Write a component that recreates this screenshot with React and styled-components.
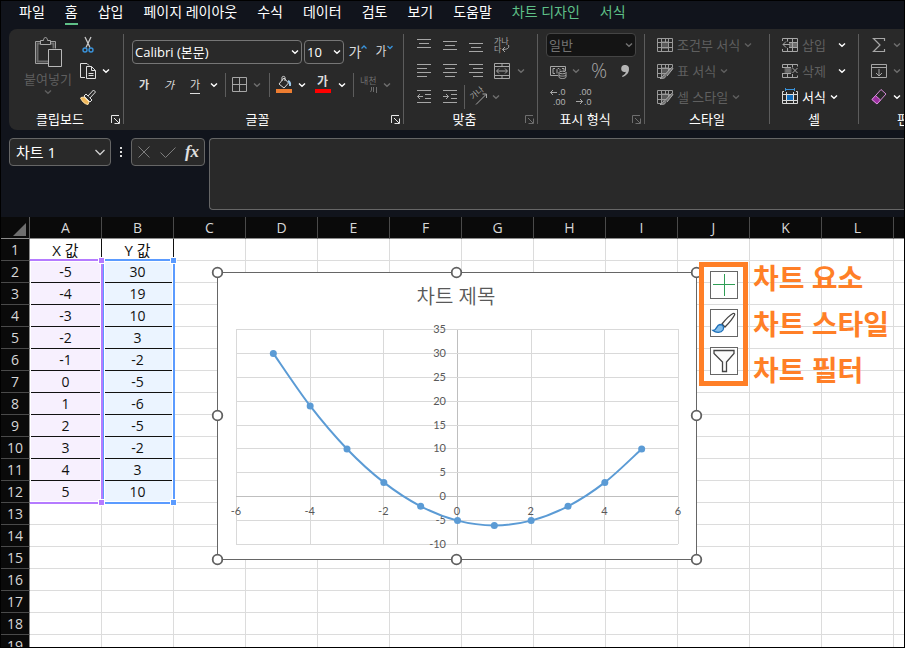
import styled, { createGlobalStyle } from "styled-components";

const SANS = `"Open Sans", "Noto Sans CJK KR", sans-serif`;
const ACCENT = "#5fc088";
const CALLOUT = "#ff7f27";
const SERIES = "#5b9bd5";

const TABS = [
  "파일",
  "홈",
  "삽입",
  "페이지 레이아웃",
  "수식",
  "데이터",
  "검토",
  "보기",
  "도움말",
];
const CHART_TABS = ["차트 디자인", "서식"];
const COLUMNS = "ABCDEFGHIJKLM".split("");
const ROW_COUNT = 19;
const POINTS = [
  [-5, 30],
  [-4, 19],
  [-3, 10],
  [-2, 3],
  [-1, -2],
  [0, -5],
  [1, -6],
  [2, -5],
  [3, -2],
  [4, 3],
  [5, 10],
];

const GlobalStyle = createGlobalStyle`
  * {
    box-sizing: border-box;
  }

  body {
    margin: 0;
    font-family: ${SANS};
  }

  button,
  input,
  select,
  textarea {
    margin: 0;
    padding: 0;
    border: 0;
    background: none;
    color: inherit;
    font: inherit;
  }

  svg {
    display: block;
    flex: none;
    overflow: visible;
  }
`;

const Window = styled.div`
  display: flex;
  flex-direction: column;
  height: 100vh;
  overflow: hidden;
  border: 1px solid #000;
  background: #11141c;
  color: #fff;
`;

const TabBar = styled.nav`
  display: flex;
  align-items: flex-start;
  flex: none;
  height: 28px;
  padding: 2px 0 0 8px;
`;

const Tab = styled.button`
  padding: 0 10px;
  color: ${({ $contextual }) => ($contextual ? ACCENT : "#fff")};
  font-size: 14px;
  line-height: 18px;
  white-space: nowrap;

  span {
    display: block;
    height: 22px;
    border-bottom: 2px solid
      ${({ $active }) => ($active ? ACCENT : "transparent")};
  }
`;

const Ribbon = styled.div`
  display: flex;
  flex: none;
  margin-left: 8px;
  padding: 3px 0 2px;
  overflow: hidden;
  border-radius: 8px 0 0 8px;
  background: #292929;
`;

const Divider = styled.div`
  flex: none;
  width: 1px;
  margin: 2px 0 4px;
  background: #5c5c5c;
`;

const GroupBox = styled.section`
  display: flex;
  flex: none;
  flex-direction: column;
  width: ${({ $width }) => $width}px;
`;

const GroupBody = styled.div`
  display: flex;
  flex-direction: ${({ $row }) => ($row ? "row" : "column")};
  height: 78px;
  padding-left: ${({ $inset }) => $inset}px;
`;

const GroupFooter = styled.div`
  display: flex;
  align-items: center;
  height: 18px;
  font-size: 13px;
  line-height: 18px;
  text-align: center;
  white-space: nowrap;

  span {
    flex: 1;
  }
`;

const Launcher = styled.button`
  width: 12px;
  color: ${({ $dim }) => ($dim ? "#6e6e6e" : "#e6e6e6")};
`;

const ToolRow = styled.div`
  display: flex;
  align-items: center;
  height: 26px;
`;

const FontRows = styled.div`
  display: flex;
  flex-direction: column;
  gap: 7px;
  padding-top: 7px;
`;

const ToolButton = styled.button`
  display: flex;
  align-items: center;
  justify-content: center;
  flex: none;
  width: ${({ $width }) => $width || 26}px;
  height: 26px;
  color: ${({ $tone }) => $tone || "#a6a6a6"};
`;

const Letter = styled.span`
  font-size: ${({ $size }) => $size || 11}px;
  line-height: 16px;
  color: #dcdcdc;
  font-weight: ${({ $bold }) => ($bold ? 700 : 400)};
  font-style: ${({ $italic }) => ($italic ? "italic" : "normal")};
  border-bottom: ${({ $underline }) =>
    $underline ? "1px solid #dcdcdc" : "0"};
`;

const Percent = styled.span`
  font-size: 20px;
  font-weight: 300;
  line-height: 24px;
`;

const ToolSeparator = styled.div`
  flex: none;
  width: 1px;
  height: 24px;
  margin: 0 ${({ $gap }) => $gap}px;
  background: #5c5c5c;
`;

const PasteButton = styled.button`
  display: flex;
  flex-direction: column;
  align-items: center;
  width: 52px;
  padding-top: 5px;
  color: #5f5f5f;
  font-size: 13px;
  line-height: 20px;
  white-space: nowrap;
`;

const ClipboardTools = styled.div`
  margin-left: 4px;
`;

const Picker = styled.div`
  display: grid;
  align-items: center;
  flex: none;
  width: ${({ $width }) => $width}px;
  height: 24px;
  margin-right: 2px;
  border: 1px solid ${({ $dim }) => ($dim ? "#444" : "#767676")};
  border-radius: 4px;
  background: ${({ $dim }) => ($dim ? "#141414" : "#292929")};
  color: ${({ $dim }) => ($dim ? "#737373" : "#fff")};

  select,
  svg {
    grid-area: 1 / 1;
  }

  select {
    width: 100%;
    padding: 0 2px;
    appearance: none;
    font-size: 13px;
    line-height: 20px;
    opacity: 1;
  }

  svg {
    justify-self: end;
    margin-right: 2px;
    pointer-events: none;
  }
`;

const LabelButton = styled.button`
  display: flex;
  align-items: center;
  gap: 4px;
  height: 26px;
  color: ${({ $enabled }) => ($enabled ? "#fff" : "#5f5f5f")};
  font-size: 13px;
  line-height: 20px;
  white-space: nowrap;

  span {
    padding-right: ${({ $wide }) => ($wide ? 8 : 0)}px;
  }
`;

const FormulaRow = styled.div`
  display: flex;
  align-items: flex-start;
  flex: none;
  padding: 8px 0 7px 8px;
`;

const FormulaPanel = styled.div`
  display: flex;
  align-items: center;
  flex: none;
  height: 28px;
  border: 1px solid #666;
  border-radius: 4px;
  background: #292929;
`;

const NameBox = styled(FormulaPanel)`
  width: 102px;
  padding: 0 5px 0 6px;

  input {
    flex: 1;
    min-width: 0;
    font-size: 15px;
    line-height: 20px;
  }
`;

const Dots = styled.div`
  display: flex;
  flex-direction: column;
  gap: 2px;
  margin: 9px 9px 0;

  i {
    width: 2px;
    height: 2px;
    background: #dcdcdc;
  }
`;

const FormulaActions = styled(FormulaPanel)`
  width: 74px;
  margin-right: 4px;
`;

const Fx = styled.span`
  color: #e0e0e0;
  font: italic 700 17px "Liberation Serif", serif;
`;

const FormulaInput = styled.textarea`
  flex: 1;
  height: 72px;
  border: 1px solid #666;
  border-right: 0;
  border-radius: 4px 0 0 4px;
  background: #292929;
  resize: none;
`;

const Sheet = styled.main`
  position: relative;
  flex: 1;
  min-height: 0;
  overflow: hidden;
  background: #fff;
  color: #111;
`;

const Grid = styled.table`
  width: 965px;
  table-layout: fixed;
  border-spacing: 0;
  font-size: 14px;
  line-height: 20px;
  text-align: center;

  th,
  td {
    height: 22px;
    padding: 0;
  }
`;

const CornerCell = styled.td`
  width: 29px;
  border-right: 1px solid #5c5c5c;
  border-bottom: 1px solid #8c8c8c;
  background: #0a0a0a;

  svg {
    margin: 3px 3px 0 auto;
  }
`;

const ColumnHeader = styled.th`
  width: 72px;
  border-right: 1px solid #4a4a4a;
  border-bottom: 1px solid #8c8c8c;
  background: #0a0a0a;
  color: #d8d8d8;
  font-weight: 400;
`;

const RowHeader = styled.th`
  border-right: 1px solid #8c8c8c;
  border-bottom: 1px solid #4a4a4a;
  background: #0a0a0a;
  color: #d8d8d8;
  font-weight: 400;
`;

const Cell = styled.td`
  border-right: 1px solid ${({ $filled }) => ($filled ? "#111" : "#dcdcdc")};
  border-bottom: 1px solid ${({ $filled }) => ($filled ? "#111" : "#dcdcdc")};
  background: ${({ $fill }) => $fill || "#fff"};
  font-size: ${({ $heading }) => ($heading ? 15 : 14)}px;
`;

// Coloured outline around the cells that feed the chart
const Range = styled.div`
  position: absolute;
  top: 42px;
  left: ${({ $left }) => $left}px;
  width: 73px;
  height: 245px;
  border: 2px solid ${({ $color }) => $color};
  border-left-width: ${({ $openLeft }) => ($openLeft ? 0 : 2)}px;
  box-shadow: inset 0 0 0 1px #fff;
  pointer-events: none;
`;

const RangeHandle = styled.i`
  position: absolute;
  top: ${({ $bottom }) => ($bottom ? "auto" : "-4px")};
  bottom: ${({ $bottom }) => ($bottom ? "-4px" : "auto")};
  right: -4px;
  width: 7px;
  height: 7px;
  border: 1px solid #fff;
  background: ${({ $color }) => $color};
`;

const ChartObject = styled.svg`
  position: absolute;
  top: 55px;
  left: 216px;
`;

const ChartTitle = styled.text`
  fill: #595959;
  font-size: 20px;
  font-weight: 350;
  text-anchor: middle;
`;

const AxisLabel = styled.text`
  fill: #595959;
  font-family: Lato, sans-serif;
  font-size: 11px;
  text-anchor: ${({ $anchor }) => $anchor};
`;

const Callout = styled.aside`
  position: absolute;
  top: 38px;
  left: 698px;
  display: flex;
  align-items: center;
  gap: 5px;
`;

const CalloutFrame = styled.div`
  display: flex;
  flex-direction: column;
  align-items: center;
  gap: 10px;
  width: 49px;
  padding: 4px 0 6px;
  border: 5px solid ${CALLOUT};
`;

const ChartButton = styled.button`
  display: flex;
  align-items: center;
  justify-content: center;
  width: 28px;
  height: 28px;
  border: 1px solid #666;
  background: #fff;
`;

const CalloutLabels = styled.div`
  color: ${CALLOUT};
  font-size: 28px;
  font-weight: 700;
  line-height: 46px;
  white-space: nowrap;
`;

const Chevron = ({ color = "currentColor" }) => (
  <svg width="8" height="6" viewBox="0 0 8 6" fill="none" stroke={color}>
    <path d="M1 1.5 4 4.3 7 1.5" strokeWidth="1.4" />
  </svg>
);

const Drop = ({ width = 12, active, label }) => (
  <ToolButton
    $width={width}
    $tone={active ? "#fff" : "#6e6e6e"}
    aria-label={label}
  >
    <Chevron />
  </ToolButton>
);

const Icon = ({ size = 16, children }) => (
  <svg
    width={size}
    height={size}
    viewBox={`0 0 ${size} ${size}`}
    fill="none"
    stroke="currentColor"
  >
    {children}
  </svg>
);

const PasteIcon = () => (
  <svg width="28" height="32" viewBox="0 0 28 32" fill="none">
    <path d="M7 4.500H1.500v22H14M17 4.500h4.500v7" stroke="#a0a0a0" />
    <path d="M6.500 6.500h-3v18H14M17 6.500h2.500v5" stroke="#6c6c6c" strokeWidth="2" />
    <path d="M6.500 7.500v-4h3c0-4 4-4 4 0h3v4z" fill="#292929" stroke="#a8a8a8" />
    <path d="M14.500 12.500h13v17h-13z" fill="#292929" stroke="#b8b8b8" />
  </svg>
);

const CutIcon = () => (
  <Icon>
    <path d="M5 0 10 10.500M11 0 6 10.500" stroke="#c8c8c8" strokeWidth="1.300" />
    <circle cx="5" cy="13" r="2" stroke="#3a94dc" strokeWidth="1.400" />
    <circle cx="11" cy="13" r="2" stroke="#3a94dc" strokeWidth="1.400" />
  </Icon>
);

const CopyIcon = () => (
  <Icon>
    <path d="M5 14.500H.5V.5H7l2 2" stroke="#e0e0e0" />
    <path d="M6.500 3.500h5l4 4v8h-9z" stroke="#e0e0e0" />
    <path d="M11.500 3.500v4h4M8.500 10.500h5M8.500 12.500h5" stroke="#e0e0e0" />
  </Icon>
);

const BrushIcon = () => (
  <Icon>
    <path d="M1 8.500 4 8l5 5-1 2.500C4 15 2 12 .5 9z" fill="#f2b95c" stroke="#ffe2a8" />
    <path d="m4 7 2-2 6 6-2 2z" fill="#292929" stroke="#e0e0e0" />
    <path d="m8 7 5.500-6 2 2-5.500 6" fill="#292929" stroke="#e0e0e0" />
  </Icon>
);

const BordersIcon = () => (
  <Icon>
    <path d="M.5.5h14v14H.5zM7.500 .5v14M.5 7.500h14" />
  </Icon>
);

const FillIcon = () => (
  <svg width="16" height="18" viewBox="0 0 16 18" fill="none">
    <path d="m3 8 5-6 4.500 5L8 12zM6 5V1.500c0-1.500 3-1.500 3 0V5" stroke="#d8d8d8" />
    <path d="M12 5c3 1 2 4 2 5" stroke="#9cc8ea" strokeWidth="2" />
    <path d="M0 13h16v4H0z" fill="#ed7d31" />
  </svg>
);

const FontColorIcon = () => (
  <svg width="16" height="18" viewBox="0 0 16 18">
    <text x="2" y="10" fill="#dcdcdc" fontSize="12" fontWeight="700">
      가
    </text>
    <path d="M0 13h16v4H0z" fill="#f00" />
  </svg>
);

const PhoneticIcon = () => (
  <svg width="18" height="18" viewBox="0 0 18 18" fill="none">
    <text x="0" y="8" fill="#6e6e6e" fontSize="9">
      내천
    </text>
    <path d="M11.500 11v3l-1 2M13.500 11v5M16.500 11v6" stroke="#6e6e6e" />
  </svg>
);

const Caret = ({ down }) => (
  <svg width="6" height="16" viewBox="0 0 6 16" fill="none">
    <path
      d={down ? "M.5 2 3 4.500 5.500 2" : "M.5 4.500 3 2l2.500 2.500"}
      stroke="#3a94dc"
      strokeWidth="1.300"
    />
  </svg>
);

const ALIGN_PATHS = {
  "위쪽 맞춤": "M1 2.500h14M3 6.500h10M1 10.500h14",
  "가운데 맞춤": "M1 4.500h14M3 8.500h10M1 12.500h14",
  "아래쪽 맞춤": "M1 6.500h14M3 10.500h10M1 14.500h14",
  "왼쪽 정렬": "M1 1.500h14M1 5.500h10M1 9.500h14M1 13.500h10",
  "가운데 정렬": "M1 1.500h14M3 5.500h10M1 9.500h14M3 13.500h10",
  "오른쪽 정렬": "M1 1.500h14M5 5.500h10M1 9.500h14M5 13.500h10",
  내어쓰기: "M1 1.500h14M9 5.500h6M9 9.500h6M1 13.500h14M1.500 7.500H7M4 5 1.500 7.500 4 10",
  들여쓰기: "M1 1.500h14M9 5.500h6M9 9.500h6M1 13.500h14M1 7.500h5.500M4 5l2.500 2.500L4 10",
};

const AlignButton = ({ name }) => (
  <ToolButton aria-label={name}>
    <Icon>
      <path d={ALIGN_PATHS[name]} />
    </Icon>
  </ToolButton>
);

const WrapIcon = () => (
  <Icon>
    <text x="0" y="7" fill="#a6a6a6" stroke="none" fontSize="8">
      가나
    </text>
    <text x="0" y="15" fill="#a6a6a6" stroke="none" fontSize="8">
      다
    </text>
    <path d="M14.500 8c1 3-1 4.500-6 4.500M11 10l-2.500 2.500L11 15" />
  </Icon>
);

const MergeIcon = () => (
  <Icon>
    <path d="M.5.5h15v15H.5zM.5 3.500h15M.5 12.500h15M8 .5v3M8 12.500v3M3 8h10M5 5.500 2.500 8 5 10.500M11 5.500 13.500 8 11 10.500" />
  </Icon>
);

const OrientationIcon = () => (
  <Icon>
    <text
      x="1"
      y="10"
      fill="#a6a6a6"
      stroke="none"
      fontSize="8"
      transform="rotate(-40 3 9)"
    >
      가나
    </text>
    <path d="M5 15.500 15 5.500M11.500 5h4v4" />
  </Icon>
);

const CurrencyIcon = () => (
  <Icon size={17}>
    <path d="M8 12.500H.5v-9h15V8M5 5.500H3v5h2M7 10.500v-4l1-1h1l1 1v1M12 5.500h2V8" />
    <ellipse cx="12.500" cy="9.500" rx="3.500" ry="1.300" fill="#292929" />
    <path d="M9 9.500V14c0 2 7 2 7 0V9.500M9 12c0 1.500 7 1.500 7 0" />
  </Icon>
);

const CommaIcon = () => (
  <svg width="10" height="14" viewBox="0 0 10 14" fill="#b4b4b4">
    <path d="M5 1a3.700 3.700 0 0 1 4 4c0 4-2.500 6.500-6.500 8l-.5-1c2.500-1 3.700-2.500 3.800-4.200C3 8.500 1 7 1.200 4.500A3.600 3.600 0 0 1 5 1z" />
  </svg>
);

const DecimalText = styled.text`
  fill: #b0b0b0;
  stroke: none;
  font-family: "Liberation Sans", sans-serif;
  font-size: 9px;
`;

const DecimalIcon = ({ increase }) => (
  <svg width="16" height="18" viewBox="0 0 16 18" fill="none" stroke="#a6a6a6">
    <DecimalText x={increase ? 8 : 3} y="7">
      {increase ? ".0" : ".00"}
    </DecimalText>
    <DecimalText x={increase ? 3 : 8} y="17">
      {increase ? ".00" : ".0"}
    </DecimalText>
    <path
      d={increase ? "M.5 4.500H7M3 2 .5 4.500 3 7" : "M0 13.500h6.500M4 11l2.500 2.500L4 16"}
    />
  </svg>
);

const StyleIcon = ({ brush }) => (
  <Icon>
    <path d="M4 4h8v8H4z" fill="#5a5a5a" stroke="none" />
    <path
      d="M.5 1.500h15v13H.5zM.5 5.500h15M.5 10.500h15M4.500 1.500v13M8.500 1.500v4M11.500 1.500v13"
      stroke="#9a9a9a"
    />
    {brush && (
      <>
        <path d="M6 16 16 4v12z" fill="#292929" stroke="none" />
        <path
          d="M3 15.500c3-.5 2-3.500 4.500-3.500 2.500 1 1 4-4.500 3.500zM8 11.500l6.500-7 1.500 1-6 7.500"
          fill="#707070"
          stroke="#aaa"
        />
      </>
    )}
  </Icon>
);

const InsertIcon = () => (
  <Icon>
    <path d="M7 5h8v5H7z" fill="#6e6e6e" stroke="none" />
    <path
      d="M.5 4V1.500h15v13H.5V12M5.500 1.500v3M10.500 1.500v13M5.500 11v3.500M7 5.500h8.500M7 10.500h8.500M1 7.500h7M4 4.500l-3 3 3 3"
      stroke="#a6a6a6"
    />
  </Icon>
);

const DeleteIcon = () => (
  <Icon>
    <path d="M3 5h6v5H3z" fill="#6e6e6e" />
    <path
      d="M.5 4.500v-3h15v2M.5 11v3.500h15v-2M5.500 1.500v3M10.500 1.500v3M5.500 11v3.500M10.500 11v3.500M0 4.500h9M0 10.500h9M10.500 5l5 5M15.500 5l-5 5"
      stroke="#a6a6a6"
    />
  </Icon>
);

const FormatIcon = () => (
  <Icon>
    <path d="M3.500-1v3M12.500-1v3M3.500.5h9" stroke="#3a94dc" />
    <path
      d="M2 2.500H.5v12h15v-12H14M.5 5.500h15M.5 11.500h15M4.500 3v11.500M11.500 3v11.500"
      stroke="#d8d8d8"
    />
    <path d="M4.500 5.500h7v6h-7z" fill="#0f6cbd" stroke="#e0e0e0" />
  </Icon>
);

const SumIcon = () => (
  <Icon>
    <path d="M13.500 4V1.500h-11L9 8l-6.500 6.500h11V12" strokeWidth="1.200" />
  </Icon>
);

const FillDownIcon = () => (
  <Icon>
    <path d="M.5 1.500h15v13H.5zM.5 4.500h15M8 6v7M5 10l3 3 3-3" />
  </Icon>
);

const EraserIcon = () => (
  <Icon>
    <path d="m1 10.500 9-10 5 4.500-9 10z" stroke="#d58ad8" />
    <path d="m1 10.500 3.500-4 5 4.500L6 15z" fill="#9b2fa0" stroke="#d58ad8" />
  </Icon>
);

const LauncherIcon = () => (
  <svg width="9" height="9" viewBox="0 0 9 9" fill="none" stroke="currentColor">
    <path d="M.5 8V.5H8M3 3l5 5M8.500 3.500v5h-5" />
  </svg>
);

const Group = ({ title, width, inset, row, launcher, children }) => (
  <>
    <GroupBox $width={width} aria-label={title}>
      <GroupBody $inset={inset} $row={row}>
        {children}
      </GroupBody>
      <GroupFooter>
        <span>{title}</span>
        {launcher && (
          <Launcher $dim={launcher === "dim"} aria-label={`${title} 설정`}>
            <LauncherIcon />
          </Launcher>
        )}
      </GroupFooter>
    </GroupBox>
    <Divider />
  </>
);

const SelectBox = ({ label, value, width, dim }) => (
  <Picker $width={width} $dim={dim}>
    <select aria-label={label} disabled={dim}>
      <option>{value}</option>
    </select>
    <Chevron />
  </Picker>
);

const LabeledTool = ({ icon, text, enabled, wide, arrow }) => (
  <LabelButton $enabled={enabled} $wide={wide}>
    {icon}
    <span>{text}</span>
    <Chevron color={arrow} />
  </LabelButton>
);

const RibbonBar = () => (
  <Ribbon>
    <Group title="클립보드" width={114} inset={13} row launcher="on">
      <PasteButton>
        <PasteIcon />
        <span>붙여넣기</span>
        <Chevron />
      </PasteButton>
      <ClipboardTools>
        <ToolRow>
          <ToolButton $width={20} aria-label="잘라내기">
            <CutIcon />
          </ToolButton>
        </ToolRow>
        <ToolRow>
          <ToolButton $width={20} aria-label="복사">
            <CopyIcon />
          </ToolButton>
          <Drop width={16} active label="복사 옵션" />
        </ToolRow>
        <ToolRow>
          <ToolButton $width={20} aria-label="서식 복사">
            <BrushIcon />
          </ToolButton>
        </ToolRow>
      </ClipboardTools>
    </Group>
    <Group title="글꼴" width={279} inset={8} launcher="on">
      <FontRows>
        <ToolRow>
          <SelectBox label="글꼴" value="Calibri (본문)" width={170} />
          <SelectBox label="글꼴 크기" value="10" width={40} />
          <ToolButton $width={24} aria-label="글꼴 크게">
            <Letter $size={14}>가</Letter>
            <Caret />
          </ToolButton>
          <ToolButton $width={28} aria-label="글꼴 작게">
            <Letter $size={12}>가</Letter>
            <Caret down />
          </ToolButton>
        </ToolRow>
        <ToolRow>
          <ToolButton $width={24} aria-label="굵게">
            <Letter $bold>가</Letter>
          </ToolButton>
          <ToolButton aria-label="기울임꼴">
            <Letter $italic>가</Letter>
          </ToolButton>
          <ToolButton aria-label="밑줄">
            <Letter $underline>가</Letter>
          </ToolButton>
          <Drop active label="밑줄 옵션" />
          <ToolSeparator $gap={5} />
          <ToolButton $width={18} aria-label="테두리">
            <BordersIcon />
          </ToolButton>
          <Drop width={16} label="테두리 옵션" />
          <ToolSeparator $gap={4} />
          <ToolButton $width={20} aria-label="채우기 색">
            <FillIcon />
          </ToolButton>
          <Drop width={16} active label="채우기 색 옵션" />
          <ToolButton aria-label="글꼴 색">
            <FontColorIcon />
          </ToolButton>
          <Drop width={12} active label="글꼴 색 옵션" />
          <ToolSeparator $gap={5} />
          <ToolButton $width={20} aria-label="윗주">
            <PhoneticIcon />
          </ToolButton>
          <Drop width={16} label="윗주 옵션" />
        </ToolRow>
      </FontRows>
    </Group>
    <Group title="맞춤" width={133} inset={7} launcher="dim">
      <ToolRow>
        <AlignButton name="위쪽 맞춤" />
        <AlignButton name="가운데 맞춤" />
        <AlignButton name="아래쪽 맞춤" />
        <ToolButton aria-label="텍스트 줄 바꿈">
          <WrapIcon />
        </ToolButton>
      </ToolRow>
      <ToolRow>
        <AlignButton name="왼쪽 정렬" />
        <AlignButton name="가운데 정렬" />
        <AlignButton name="오른쪽 정렬" />
        <ToolButton aria-label="병합">
          <MergeIcon />
        </ToolButton>
        <Drop label="병합 옵션" />
      </ToolRow>
      <ToolRow>
        <AlignButton name="내어쓰기" />
        <AlignButton name="들여쓰기" />
        <ToolSeparator $gap={1} />
        <ToolButton aria-label="방향">
          <OrientationIcon />
        </ToolButton>
        <Drop width={8} label="방향 옵션" />
      </ToolRow>
    </Group>
    <Group title="표시 형식" width={106} inset={8} launcher="dim">
      <ToolRow>
        <SelectBox label="표시 형식" value="일반" width={90} dim />
      </ToolRow>
      <ToolRow>
        <ToolButton $width={24} aria-label="회계 표시 형식">
          <CurrencyIcon />
        </ToolButton>
        <Drop label="회계 옵션" />
        <ToolButton $width={34}>
          <Percent>%</Percent>
        </ToolButton>
        <ToolButton $width={18} aria-label="쉼표 스타일">
          <CommaIcon />
        </ToolButton>
      </ToolRow>
      <ToolRow>
        <ToolButton $width={24} aria-label="자릿수 늘림">
          <DecimalIcon increase />
        </ToolButton>
        <ToolButton $width={28} aria-label="자릿수 줄임">
          <DecimalIcon />
        </ToolButton>
      </ToolRow>
    </Group>
    <Group title="스타일" width={124} inset={12}>
      <LabeledTool icon={<StyleIcon />} text="조건부 서식" />
      <LabeledTool icon={<StyleIcon brush />} text="표 서식" />
      <LabeledTool icon={<StyleIcon brush />} text="셀 스타일" />
    </Group>
    <Group title="셀" width={88} inset={12}>
      <LabeledTool icon={<InsertIcon />} text="삽입" wide arrow="#fff" />
      <LabeledTool icon={<DeleteIcon />} text="삭제" wide arrow="#fff" />
      <LabeledTool icon={<FormatIcon />} text="서식" enabled arrow="#fff" />
    </Group>
    <Group title="편집" width={100} inset={10}>
      <ToolRow>
        <ToolButton $width={20} aria-label="자동 합계">
          <SumIcon />
        </ToolButton>
        <Drop width={16} label="합계 옵션" />
      </ToolRow>
      <ToolRow>
        <ToolButton $width={20} aria-label="채우기">
          <FillDownIcon />
        </ToolButton>
        <Drop width={16} label="채우기 옵션" />
      </ToolRow>
      <ToolRow>
        <ToolButton $width={20} aria-label="지우기">
          <EraserIcon />
        </ToolButton>
        <Drop width={16} active label="지우기 옵션" />
      </ToolRow>
    </Group>
  </Ribbon>
);

const FormulaBar = () => (
  <FormulaRow>
    <NameBox>
      <input aria-label="이름 상자" defaultValue="차트 1" />
      <svg width="10" height="7" viewBox="0 0 10 7" fill="none" stroke="#d0d0d0">
        <path d="M.5 1 5 5.500 9.500 1" strokeWidth="1.300" />
      </svg>
    </NameBox>
    <Dots>
      <i />
      <i />
      <i />
    </Dots>
    <FormulaActions>
      <ToolButton $width={24} $tone="#7d7d7d" aria-label="취소">
        <Icon size={12}>
          <path d="m.5.5 11 11M11.500.5l-11 11" />
        </Icon>
      </ToolButton>
      <ToolButton $width={24} $tone="#7d7d7d" aria-label="입력">
        <Icon>
          <path d="m.5 8.500 5 5 10-10" />
        </Icon>
      </ToolButton>
      <ToolButton $width={24} aria-label="함수 삽입">
        <Fx>fx</Fx>
      </ToolButton>
    </FormulaActions>
    <FormulaInput aria-label="수식 입력줄" />
  </FormulaRow>
);

const cellValue = (row, col) => {
  if (col > 1 || row > POINTS.length) return null;
  if (row === 0) return col === 0 ? "X 값" : "Y 값";
  return POINTS[row - 1][col];
};

const cellFill = (row, col) => {
  if (row === 0 || row > POINTS.length || col > 1) return undefined;
  return col === 0 ? "#f7f0fe" : "#ebf4ff";
};

const DataGrid = () => (
  <Grid>
    <thead>
      <tr>
        <CornerCell>
          <svg width="13" height="13" viewBox="0 0 13 13">
            <path d="M13 0v13H0z" fill="#6e6e6e" />
          </svg>
        </CornerCell>
        {COLUMNS.map((name) => (
          <ColumnHeader key={name} scope="col">
            {name}
          </ColumnHeader>
        ))}
      </tr>
    </thead>
    <tbody>
      {Array.from({ length: ROW_COUNT }, (_, row) => (
        <tr key={row}>
          <RowHeader scope="row">{row + 1}</RowHeader>
          {COLUMNS.map((name, col) => {
            const value = cellValue(row, col);
            return (
              <Cell
                key={name}
                $heading={row === 0}
                $filled={value !== null}
                $fill={cellFill(row, col)}
              >
                {value}
              </Cell>
            );
          })}
        </tr>
      ))}
    </tbody>
  </Grid>
);

const PLOT = { left: 19, top: 57, width: 442, height: 215 };
const toX = (x) => PLOT.left + ((x + 6) / 12) * PLOT.width;
const toY = (y) => PLOT.top + ((35 - y) / 45) * PLOT.height;
const crisp = (n) => Math.round(n) + 0.5;

const smoothPath = (points) => {
  const pts = points.map(([x, y]) => [toX(x) + 0.5, toY(y) + 0.5]);
  return pts.reduce((path, [x, y], i) => {
    if (i === 0) return `M${x} ${y}`;
    const before = pts[i - 2] || pts[i - 1];
    const from = pts[i - 1];
    const after = pts[i + 1] || pts[i];
    const c1 = [from[0] + (x - before[0]) / 6, from[1] + (y - before[1]) / 6];
    const c2 = [x - (after[0] - from[0]) / 6, y - (after[1] - from[1]) / 6];
    return `${path}C${c1.join(" ")} ${c2.join(" ")} ${x} ${y}`;
  }, "");
};

const Chart = () => {
  const xTicks = [-6, -4, -2, 0, 2, 4, 6];
  const yTicks = [35, 30, 25, 20, 15, 10, 5, 0, -5, -10];
  const right = PLOT.left + PLOT.width;
  const bottom = PLOT.top + PLOT.height;

  return (
    <ChartObject width="480" height="288" role="img" aria-label="차트 제목">
      <rect x="0.5" y="0.5" width="479" height="287" fill="#fff" stroke="#666" />
      <ChartTitle x="239" y="32">
        차트 제목
      </ChartTitle>
      {xTicks.map((t) => (
        <path
          key={t}
          d={`M${crisp(toX(t))} ${PLOT.top}V${bottom}`}
          stroke={t === 0 ? "#bfbfbf" : "#d9d9d9"}
        />
      ))}
      {yTicks.map((t) => (
        <path
          key={t}
          d={`M${PLOT.left} ${crisp(toY(t))}H${right}`}
          stroke={t === 0 ? "#bfbfbf" : "#d9d9d9"}
        />
      ))}
      {xTicks.map((t) => (
        <AxisLabel key={t} x={toX(t)} y={toY(0) + 19} $anchor="middle">
          {t}
        </AxisLabel>
      ))}
      {yTicks.map((t) => (
        <AxisLabel key={t} x="229" y={toY(t) + 4} $anchor="end">
          {t}
        </AxisLabel>
      ))}
      <path d={smoothPath(POINTS)} fill="none" stroke={SERIES} strokeWidth="2" />
      {POINTS.map(([x, y]) => (
        <circle key={x} cx={toX(x) + 0.5} cy={toY(y) + 0.5} r="3.5" fill={SERIES} />
      ))}
      {[0, 239, 479].map((x) =>
        [0, 143, 287]
          .filter((y) => !(x === 239 && y === 143))
          .map((y) => (
            <circle
              key={`${x}-${y}`}
              cx={x + 0.5}
              cy={y + 0.5}
              r="4.8"
              fill="#fff"
              stroke="#606060"
              strokeWidth="1.8"
            />
          ))
      )}
    </ChartObject>
  );
};

const ChartTools = () => (
  <Callout>
    <CalloutFrame>
      <ChartButton aria-label="차트 요소">
        <svg width="22" height="22" viewBox="0 0 22 22">
          <path d="M11.500 0v22M0 10.500h22" stroke="#2f9e55" />
        </svg>
      </ChartButton>
      <ChartButton aria-label="차트 스타일">
        <svg width="24" height="22" viewBox="0 0 24 22" fill="none">
          <path
            d="M10 12c4-5 8-9 11-10.500 1.500-.500 2 .5 1.500 1.500-1.500 3-5 7.500-9.500 12z"
            fill="#fff"
            stroke="#444"
            strokeWidth="1.300"
          />
          <path
            d="M1 18.500c4 0 3-5.500 7-6 3 0 4.500 3 3 5.500-2 3-7 3-10 .5z"
            fill="#83beec"
            stroke="#1e6fb8"
            strokeWidth="1.300"
          />
        </svg>
      </ChartButton>
      <ChartButton aria-label="차트 필터">
        <svg width="22" height="24" viewBox="0 0 22 24">
          <path
            d="M1 1.500h20v3L13.500 13v9.500h-4V13L1 4.500z"
            fill="#fafafa"
            stroke="#444"
            strokeWidth="1.300"
          />
        </svg>
      </ChartButton>
    </CalloutFrame>
    <CalloutLabels>
      <div>차트 요소</div>
      <div>차트 스타일</div>
      <div>차트 필터</div>
    </CalloutLabels>
  </Callout>
);

const App = () => (
  <>
    <GlobalStyle />
    <Window>
      <TabBar>
        {TABS.map((name) => (
          <Tab key={name} $active={name === "홈"}>
            <span>{name}</span>
          </Tab>
        ))}
        {CHART_TABS.map((name) => (
          <Tab key={name} $contextual>
            <span>{name}</span>
          </Tab>
        ))}
      </TabBar>
      <RibbonBar />
      <FormulaBar />
      <Sheet>
        <DataGrid />
        <Range $left={101} $color="#5b9bff">
          <RangeHandle $color="#5b9bff" />
          <RangeHandle $color="#5b9bff" $bottom />
        </Range>
        <Range $left={29} $color="#b57bff" $openLeft>
          <RangeHandle $color="#b57bff" />
          <RangeHandle $color="#b57bff" $bottom />
        </Range>
        <Chart />
        <ChartTools />
      </Sheet>
    </Window>
  </>
);

export default App;
